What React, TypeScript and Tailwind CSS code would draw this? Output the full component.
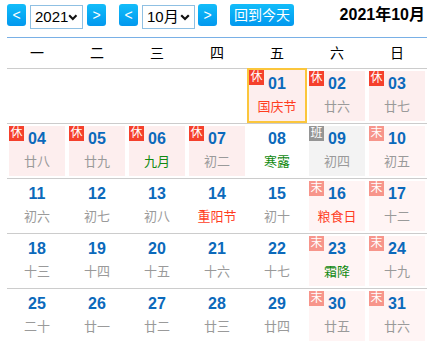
import React from "react";

type Cell = {
  d?: string;
  l?: string;
  lc?: "g" | "r" | "n";
  badge?: "休" | "末" | "班";
  bg?: "h" | "w" | "b" | "n";
  today?: boolean;
};

const rows: Cell[][] = [
  [
    {},
    {},
    {},
    {},
    { d: "01", l: "国庆节", lc: "r", badge: "休", bg: "h", today: true },
    { d: "02", l: "廿六", badge: "休", bg: "h" },
    { d: "03", l: "廿七", badge: "休", bg: "h" },
  ],
  [
    { d: "04", l: "廿八", badge: "休", bg: "h" },
    { d: "05", l: "廿九", badge: "休", bg: "h" },
    { d: "06", l: "九月", lc: "g", badge: "休", bg: "h" },
    { d: "07", l: "初二", badge: "休", bg: "h" },
    { d: "08", l: "寒露", lc: "g" },
    { d: "09", l: "初四", badge: "班", bg: "b" },
    { d: "10", l: "初五", badge: "末", bg: "w" },
  ],
  [
    { d: "11", l: "初六" },
    { d: "12", l: "初七" },
    { d: "13", l: "初八" },
    { d: "14", l: "重阳节", lc: "r" },
    { d: "15", l: "初十" },
    { d: "16", l: "粮食日", lc: "r", badge: "末", bg: "w" },
    { d: "17", l: "十二", badge: "末", bg: "w" },
  ],
  [
    { d: "18", l: "十三" },
    { d: "19", l: "十四" },
    { d: "20", l: "十五" },
    { d: "21", l: "十六" },
    { d: "22", l: "十七" },
    { d: "23", l: "霜降", lc: "g", badge: "末", bg: "w" },
    { d: "24", l: "十九", badge: "末", bg: "w" },
  ],
  [
    { d: "25", l: "二十" },
    { d: "26", l: "廿一" },
    { d: "27", l: "廿二" },
    { d: "28", l: "廿三" },
    { d: "29", l: "廿四" },
    { d: "30", l: "廿五", badge: "末", bg: "w" },
    { d: "31", l: "廿六", badge: "末", bg: "w" },
  ],
];

const font = {
  fontFamily: '"Liberation Sans", Arial, "Noto Sans CJK SC", sans-serif',
};

function NavBtn({ ch }: { ch: string }) {
  return (
    <div className="w-[19px] h-[22px] rounded-[3px] bg-gradient-to-b from-[#13bdfa] to-[#0398ee] text-white text-[14px] leading-[22px] text-center">
      {ch}
    </div>
  );
}

function Sel({ text, w }: { text: string; w: string }) {
  return (
    <div
      className={`${w} h-[24px] border border-[#8fc0e3] bg-white flex items-center justify-between pl-[4px] pr-[4px] text-[15px] text-black`}
    >
      <span className="leading-[22px]">{text}</span>
      <svg width="10" height="7" viewBox="0 0 10 7" className="mt-[1px]">
        <path d="M1.2 1.2 L5 5 L8.8 1.2" stroke="#111" strokeWidth="2.2" fill="none" />
      </svg>
    </div>
  );
}

function Badge({ t }: { t: string }) {
  const color =
    t === "休" ? "bg-[#f5402c]" : t === "末" ? "bg-[#f7958b]" : "bg-[#959595]";
  return (
    <div
      className={`absolute top-0 left-0 w-[15px] h-[15px] ${color} text-white text-[12px] leading-[15px] text-center`}
    >
      {t}
    </div>
  );
}

function DayCell({ c }: { c: Cell }) {
  if (!c.d) return <div />;
  const bg =
    c.bg === "h"
      ? "bg-[#fdeeee]"
      : c.bg === "w"
      ? "bg-[#fff4f4]"
      : c.bg === "b"
      ? "bg-[#f3f3f3]"
      : "bg-white";
  const lc =
    c.lc === "r" ? "text-[#ff3d1f]" : c.lc === "g" ? "text-[#118a11]" : "text-[#9a9a9a]";
  const inner = (
    <div className={`relative h-full ${bg} flex flex-col items-center`}>
      {c.badge && <Badge t={c.badge} />}
      <div
        className={`${c.today ? "pt-[5px]" : "pt-[4px]"} text-[16px] leading-[18px] font-bold text-[#0b69bb]`}
      >
        {c.d}
      </div>
      <div className={`mt-[6px] text-[13px] leading-[16px] ${lc}`}>{c.l}</div>
    </div>
  );
  if (c.today) {
    return (
      <div className="-mt-px h-[55px] border-2 border-[#fbc63c] relative">
        {inner}
      </div>
    );
  }
  return <div className="p-[2px] h-[54px]">{inner}</div>;
}

export default function App() {
  return (
    <div className="w-[434px] h-[350px] bg-white px-[7px]" style={font}>
      <div className="h-[38px] border-b border-[#79b0e6] flex items-start pt-[4px]">
        <NavBtn ch="<" />
        <div className="ml-[4px] mt-[1px]">
          <Sel text="2021" w="w-[53px]" />
        </div>
        <div className="ml-[4px]">
          <NavBtn ch=">" />
        </div>
        <div className="ml-[13px]">
          <NavBtn ch="<" />
        </div>
        <div className="ml-[4px] mt-[1px]">
          <Sel text="10月" w="w-[53px]" />
        </div>
        <div className="ml-[3px]">
          <NavBtn ch=">" />
        </div>
        <div className="ml-[13px] w-[64px] h-[22px] rounded-[3px] bg-gradient-to-b from-[#13bdfa] to-[#0398ee] text-white text-[14px] leading-[22px] text-center">
          回到今天
        </div>
        <div className="ml-auto mr-[2px] text-[16px] font-bold text-black leading-[22px]">
          2021年10月
        </div>
      </div>
      <div className="h-[31px] border-b border-[#cccccc] grid grid-cols-7 text-[14px] text-black">
        {["一", "二", "三", "四", "五", "六", "日"].map((w) => (
          <div key={w} className="flex items-center justify-center">
            {w}
          </div>
        ))}
      </div>
      {rows.map((r, i) => (
        <div
          key={i}
          className={`grid grid-cols-7 ${i < rows.length - 1 ? "h-[55px] border-b border-[#cccccc]" : "h-[54px]"}`}
        >
          {r.map((c, j) => (
            <DayCell key={j} c={c} />
          ))}
        </div>
      ))}
    </div>
  );
}
